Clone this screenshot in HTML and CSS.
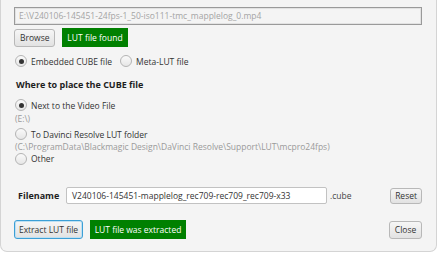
FILE: index.html
```html
<!DOCTYPE html>
<html>
<head>
<meta charset="utf-8">
<link rel="stylesheet" href="styles.css">
</head>
<body>
<div class="window">
  <div class="pathfield">E:\V240106-145451-24fps-1_50-iso111-tmc_mapplelog_0.mp4</div>
  <div class="row r2">
    <button class="btn browse">Browse</button>
    <span class="badge found">LUT file found</span>
  </div>
  <div class="row radios r3">
    <label class="radio"><span class="dot on"></span>Embedded CUBE file</label>
    <label class="radio meta"><span class="dot"></span>Meta-LUT file</label>
  </div>
  <div class="heading">Where to place the CUBE file</div>
  <label class="radio r5"><span class="dot on"></span>Next to the Video File</label>
  <div class="hint h1">(E:\)</div>
  <label class="radio r7"><span class="dot"></span>To Davinci Resolve LUT folder</label>
  <div class="hint h2">(C:\ProgramData\Blackmagic Design\DaVinci Resolve\Support\LUT\mcpro24fps)</div>
  <label class="radio r9"><span class="dot"></span>Other</label>
  <div class="row fnrow">
    <span class="fnlabel">Filename</span>
    <div class="fnfield">V240106-145451-mapplelog_rec709-rec709_rec709-x33</div>
    <span class="ext">.cube</span>
    <button class="btn small reset">Reset</button>
  </div>
  <div class="row bottom">
    <button class="btn focus">Extract LUT file</button>
    <span class="badge extracted">LUT file was extracted</span>
    <button class="btn close">Close</button>
  </div>
</div>
</body>
</html>
```
FILE: styles.css
```css
* { box-sizing: border-box; }
html, body { margin: 0; padding: 0; background: #ffffff; }
body {
  font-family: "Open Sans", "Noto Sans", sans-serif;
  font-size: 8.5px;
  color: #333333;
}
.window {
  width: 437px;
  height: 252px;
  background: #f4f4f4;
  border: 1px solid #d4d4d4;
  border-top: none;
  border-radius: 0 0 7px 7px;
  padding: 7px 14px 0 13px;
  display: flex;
  flex-direction: column;
  white-space: nowrap;
}
.pathfield {
  height: 18px;
  border: 1px solid #9a9a9a;
  box-shadow: inset 0 0 0 1px #e2e2e2;
  background: #f4f4f4;
  color: #a4a4a4;
  padding: 0 4px;
  line-height: 16px;
  overflow: hidden;
}
.row { display: flex; align-items: center; }
.r2 { margin-top: 3px; height: 19px; gap: 7px; }
.btn {
  font-family: inherit;
  font-size: 8.5px;
  color: #333;
  height: 18px;
  padding: 0 5px;
  border: 1px solid #b8b8b8;
  border-radius: 3px;
  background: linear-gradient(#f6f6f6, #e2e2e2);
  line-height: 16px;
  margin: 0;
  white-space: nowrap;
}
.browse { width: 41px; height: 18px; }
.badge {
  background: #008000;
  color: #ffffff;
  height: 19px;
  line-height: 19px;
  text-align: center;
}
.found { width: 66px; }
.r3 { margin-top: 7px; height: 14px; }
.radio {
  display: flex;
  align-items: center;
  height: 14px;
}
.meta { margin-left: 7px; }
.dot {
  width: 12px;
  height: 12px;
  border-radius: 50%;
  border: 1px solid #b4b4b4;
  background: linear-gradient(#fafafa, #e6e6e6);
  margin-right: 4px;
  margin-left: 1px;
  position: relative;
  flex: none;
}
.dot.on::after {
  content: "";
  position: absolute;
  left: 2.5px;
  top: 2.5px;
  width: 5px;
  height: 5px;
  border-radius: 50%;
  background: #333;
}
.heading {
  margin-top: 9px;
  height: 16px;
  line-height: 16px;
  font-weight: bold;
  font-size: 9px;
  color: #1e1e1e;
  padding-left: 2px;
}
.r5 { margin-top: 5px; }
.hint {
  color: #9a9a9a;
  padding-left: 1px;
}
.h1 { height: 14px; line-height: 14px; }
.r7 { margin-top: 1px; }
.h2 { height: 12px; line-height: 12px; }
.r9 { margin-top: -1px; height: 13px; }
.fnrow { margin-top: 22px; height: 17px; }
.fnlabel {
  font-weight: bold;
  font-size: 9px;
  color: #1e1e1e;
  padding-left: 4px;
  width: 52px;
}
.fnfield {
  width: 261px;
  height: 17px;
  border: 1px solid #c2c2c2;
  border-radius: 2px;
  background: #ffffff;
  padding: 0 5px;
  line-height: 15px;
  overflow: hidden;
}
.ext { margin-left: 3px; color: #444; }
.small { height: 16px; line-height: 14px; padding: 0 4px; }
.reset { margin-left: auto; }
.bottom { margin-top: 16px; height: 19px; gap: 7px; }
.focus {
  height: 19px;
  border: 1px solid #3c9fd6;
  box-shadow: inset 0 0 0 1px #bfe0f2;
  width: 69px;
  padding: 0;
}
.extracted { width: 96px; }
.close { margin-left: auto; height: 18px; width: 33px; padding: 0; }
```
